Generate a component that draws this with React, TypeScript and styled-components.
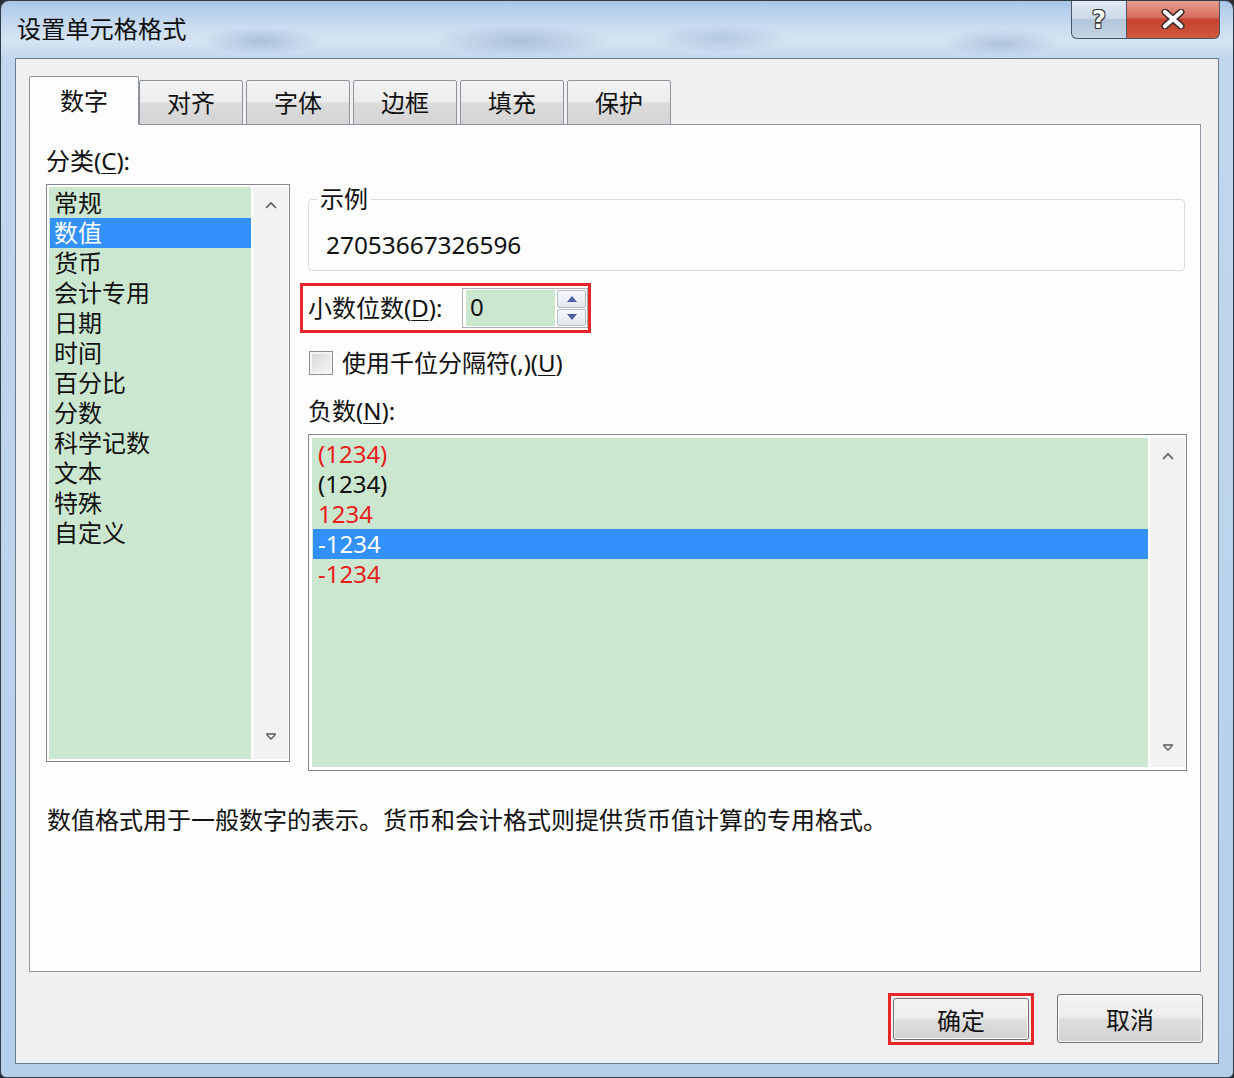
import React from "react";
import styled, { createGlobalStyle } from "styled-components";

const Global = createGlobalStyle`
  html, body { margin: 0; padding: 0; background: #2a2f35; }
  body { font-family: "Noto Sans", "Noto Sans CJK SC", sans-serif; color: #111; }
  * { box-sizing: border-box; }
`;

const Window = styled.div`
  width: 1234px;
  height: 1078px;
  border: 1px solid #2f3b47;
  border-radius: 9px 9px 6px 6px;
  overflow: hidden;
  display: flex;
  flex-direction: column;
  padding: 0 14px 13px 14px;
  background:
    radial-gradient(ellipse 60px 14px at 260px 40px, rgba(120,150,185,0.45), transparent),
    radial-gradient(ellipse 90px 16px at 520px 40px, rgba(110,140,175,0.4), transparent),
    radial-gradient(ellipse 70px 14px at 720px 38px, rgba(120,150,185,0.35), transparent),
    radial-gradient(ellipse 60px 14px at 1000px 42px, rgba(110,140,175,0.35), transparent),
    linear-gradient(180deg, #a9c6e6 0px, #c6daef 22px, #d5e4f3 40px, #c2d7ee 58px, #b5cfea 100%);
`;

const TitleBar = styled.div`
  height: 57px;
  flex: 0 0 57px;
  display: flex;
  justify-content: space-between;
  align-items: flex-start;
`;

const Title = styled.div`
  font-size: 24.2px;
  line-height: 30px;
  margin: 13px 0 0 2px;
  color: #0d0d0d;
`;

const Caption = styled.div`
  display: flex;
  margin-top: -1px;
  margin-right: -1px;
`;

const CapButton = styled.div<{ $close?: boolean }>`
  height: 39px;
  width: ${(p) => (p.$close ? 93 : 56)}px;
  border: 1px solid #4a5663;
  border-top: none;
  border-left: ${(p) => (p.$close ? "none" : "1px solid #4a5663")};
  border-radius: ${(p) => (p.$close ? "0 0 6px 0" : "0 0 0 6px")};
  display: flex;
  align-items: center;
  justify-content: center;
  background: ${(p) =>
    p.$close
      ? "linear-gradient(180deg, #e7a091 0%, #d97060 45%, #c5412c 52%, #cf5a40 100%)"
      : "linear-gradient(180deg, #e3ebf4 0%, #ccd9e7 48%, #b3c5d9 52%, #c5d4e4 100%)"};
`;

const HelpGlyph = styled.span`
  font-family: "DejaVu Sans", sans-serif;
  font-weight: bold;
  font-size: 24px;
  line-height: 1;
  color: #fff;
  text-shadow: -1px -1px 0 #333, 1px -1px 0 #333, -1px 1px 0 #333, 1px 1px 0 #333;
  margin-top: 2px;
`;

const Client = styled.div`
  flex: 1;
  border: 1px solid #6c7b8a;
  background: #f0f0f0;
  display: flex;
  flex-direction: column;
  padding: 17px 17px 0 13px;
`;

const TabRow = styled.div`
  display: flex;
  align-items: flex-end;
  height: 49px;
  margin-bottom: -1px;
  position: relative;
  z-index: 1;
`;

const Tab = styled.div<{ $active?: boolean }>`
  width: ${(p) => (p.$active ? 110 : 104)}px;
  height: ${(p) => (p.$active ? 49 : 45)}px;
  margin-right: ${(p) => (p.$active ? 0 : 3)}px;
  border: 1px solid #8c939c;
  border-bottom: ${(p) => (p.$active ? "1px solid #fdfdfd" : "1px solid #8c939c")};
  border-radius: 2px 2px 0 0;
  display: flex;
  justify-content: center;
  align-items: ${(p) => (p.$active ? "flex-start" : "center")};
  padding-top: ${(p) => (p.$active ? 9 : 0)}px;
  font-size: 24px;
  line-height: 30px;
  background: ${(p) =>
    p.$active
      ? "#fdfdfd"
      : "linear-gradient(180deg, #f3f3f3 0%, #ececec 48%, #dcdcdc 52%, #d4d4d4 100%)"};
`;

const Panel = styled.div`
  flex: 0 0 848px;
  border: 1px solid #8e98a3;
  background: #fdfdfd;
  padding: 21px 13px 0 16px;
  display: flex;
  flex-direction: column;
`;

const FieldLabel = styled.div`
  font-size: 24px;
  line-height: 30px;
  color: #111;
`;

const Key = styled.span`
  text-decoration: underline;
  text-underline-offset: 3px;
  text-decoration-thickness: 1px;
`;

const Columns = styled.div`
  display: grid;
  grid-template-columns: 244px 1fr;
  column-gap: 18px;
  margin-top: 8px;
  align-items: start;
`;

const ListBox = styled.div<{ $h: number; $pad: number }>`
  height: ${(p) => p.$h}px;
  border: 1px solid #838890;
  background: #fff;
  padding: ${(p) => p.$pad}px 1px ${(p) => p.$pad}px ${(p) => p.$pad}px;
  display: flex;
`;

const ListArea = styled.div`
  flex: 1;
  background: #cce7cf;
  padding-top: 1px;
`;

const Item = styled.div<{ $sel?: boolean; $red?: boolean; $indent: number }>`
  height: 30px;
  line-height: 30px;
  font-size: 24px;
  padding-left: ${(p) => p.$indent}px;
  margin-left: 1px;
  background: ${(p) => (p.$sel ? "#3391fb" : "transparent")};
  color: ${(p) => (p.$sel ? "#fff" : p.$red ? "#e8201c" : "#111")};
  white-space: nowrap;
`;

const ScrollBar = styled.div<{ $top: number; $bottom: number }>`
  width: 35px;
  margin-left: 2px;
  background: #f2f2f3;
  display: flex;
  flex-direction: column;
  justify-content: space-between;
  align-items: center;
  padding: ${(p) => p.$top}px 0 ${(p) => p.$bottom}px;
`;

const RightCol = styled.div`
  display: flex;
  flex-direction: column;
  align-items: flex-start;
`;

const Sample = styled.fieldset`
  margin: 0 2px 0 0;
  align-self: stretch;
  padding: 0;
  border: 1px solid #d6dde3;
  border-radius: 4px;
  min-width: 0;
`;

const Legend = styled.legend`
  margin-left: 8px;
  padding: 0 3px;
  font-size: 24px;
  line-height: 30px;
`;

const SampleValue = styled.div`
  padding-left: 17px;
  margin: 16px 0 10px;
  font-size: 24.4px;
  line-height: 30px;
  color: #111;
`;

const RedFrame = styled.div<{ $w: number; $h: number }>`
  width: ${(p) => p.$w}px;
  height: ${(p) => p.$h}px;
  border: 3px solid #e8262a;
  display: flex;
  align-items: center;
`;

const DecimalRow = styled(RedFrame)`
  margin: 12px 0 0 -8px;
  padding-left: 5px;
`;

const SpinBox = styled.div`
  margin-left: auto;
  width: 126px;
  height: 40px;
  border: 1px solid #adb2b8;
  background: #fff;
  display: flex;
  padding: 1px 1px 1px 3px;
`;

const SpinField = styled.div`
  flex: 1;
  background: #cce7cf;
  font-size: 24px;
  line-height: 34px;
  padding-left: 4px;
  color: #111;
`;

const SpinButtons = styled.div`
  width: 29px;
  margin-left: 2px;
  display: flex;
  flex-direction: column;
  gap: 1px;
`;

const SpinBtn = styled.div`
  flex: 1;
  border: 1px solid #b6bcc4;
  border-radius: 2px;
  background: linear-gradient(180deg, #f7f9fb, #e2e7ee);
  display: flex;
  align-items: center;
  justify-content: center;
`;

const CheckRow = styled.div`
  display: flex;
  align-items: center;
  margin-top: 18px;
  height: 24px;
  margin-left: 1px;
`;

const CheckBox = styled.div`
  width: 24px;
  height: 24px;
  border: 1px solid #8e8f8f;
  background: linear-gradient(135deg, #d8d8d8, #f6f6f6);
  box-shadow: inset 0 0 0 2px #f4f4f4;
`;

const CheckText = styled.span`
  margin-left: 9px;
  font-size: 24px;
  line-height: 30px;
`;

const NegLabel = styled(FieldLabel)`
  margin-top: 21px;
`;

const NegList = styled(ListBox)`
  margin-top: 8px;
  align-self: stretch;
`;

const Description = styled.div`
  margin: 34px 0 0 1px;
  font-size: 24px;
  line-height: 30px;
  color: #111;
  white-space: nowrap;
`;

const ButtonRow = styled.div`
  display: flex;
  justify-content: flex-end;
  align-items: flex-start;
  gap: 23px;
  padding-top: 21px;
  margin-right: -2px;
`;

const OkFrame = styled(RedFrame)`
  padding: 2px;
  justify-content: center;
`;

const Button = styled.div<{ $w: number; $h: number }>`
  width: ${(p) => p.$w}px;
  height: ${(p) => p.$h}px;
  border: 1px solid #707070;
  border-radius: 3px;
  display: flex;
  align-items: center;
  justify-content: center;
  font-size: 24px;
  color: #111;
  background: linear-gradient(180deg, #f4f4f4 0%, #ececec 48%, #dedede 52%, #d2d2d2 100%);
  box-shadow: inset 0 0 0 1px #fbfbfb;
`;

const CancelButton = styled(Button)`
  margin-top: 1px;
`;

const UpArrow = () => (
  <svg width="12" height="8" viewBox="0 0 12 8">
    <path d="M1 7 L6 2 L11 7" fill="none" stroke="#5a5a5a" strokeWidth="1.6" />
  </svg>
);

const DownArrow = () => (
  <svg width="12" height="8" viewBox="0 0 12 8">
    <path d="M1 1 L11 1 M2 2 L6 6 L10 2" fill="none" stroke="#5a5a5a" strokeWidth="1.4" />
  </svg>
);

const Tri = ({ up }: { up?: boolean }) => (
  <svg width="10" height="6" viewBox="0 0 10 6">
    <path d={up ? "M0 6 L5 0 L10 6 Z" : "M0 0 L10 0 L5 6 Z"} fill="#4b5ea6" />
  </svg>
);

const CloseX = () => (
  <svg width="26" height="20" viewBox="0 0 26 20">
    <path d="M5 3 L21 17 M21 3 L5 17" stroke="#3a2a28" strokeWidth="7" strokeLinecap="round" />
    <path d="M5 3 L21 17 M21 3 L5 17" stroke="#ffffff" strokeWidth="4.2" strokeLinecap="round" />
  </svg>
);

const categories = ["常规", "数值", "货币", "会计专用", "日期", "时间", "百分比", "分数", "科学记数", "文本", "特殊", "自定义"];

const negatives: { text: string; red?: boolean; sel?: boolean }[] = [
  { text: "(1234)", red: true },
  { text: "(1234)" },
  { text: "1234", red: true },
  { text: "-1234", sel: true },
  { text: "-1234", red: true },
];

const tabs = ["数字", "对齐", "字体", "边框", "填充", "保护"];

export default function App() {
  return (
    <>
      <Global />
      <Window>
        <TitleBar>
          <Title>设置单元格格式</Title>
          <Caption>
            <CapButton>
              <HelpGlyph>?</HelpGlyph>
            </CapButton>
            <CapButton $close>
              <CloseX />
            </CapButton>
          </Caption>
        </TitleBar>
        <Client>
          <TabRow>
            {tabs.map((t, i) => (
              <Tab key={t} $active={i === 0}>
                {t}
              </Tab>
            ))}
          </TabRow>
          <Panel>
            <FieldLabel>
              分类(<Key>C</Key>):
            </FieldLabel>
            <Columns>
              <ListBox $h={578} $pad={2}>
                <ListArea>
                  {categories.map((c, i) => (
                    <Item key={c} $sel={i === 1} $indent={4}>
                      {c}
                    </Item>
                  ))}
                </ListArea>
                <ScrollBar $top={14} $bottom={18}>
                  <UpArrow />
                  <DownArrow />
                </ScrollBar>
              </ListBox>
              <RightCol>
                <Sample>
                  <Legend>示例</Legend>
                  <SampleValue>27053667326596</SampleValue>
                </Sample>
                <DecimalRow $w={291} $h={50}>
                  <FieldLabel>
                    小数位数(<Key>D</Key>):
                  </FieldLabel>
                  <SpinBox>
                    <SpinField>0</SpinField>
                    <SpinButtons>
                      <SpinBtn>
                        <Tri up />
                      </SpinBtn>
                      <SpinBtn>
                        <Tri />
                      </SpinBtn>
                    </SpinButtons>
                  </SpinBox>
                </DecimalRow>
                <CheckRow>
                  <CheckBox />
                  <CheckText>
                    使用千位分隔符(,)(<Key>U</Key>)
                  </CheckText>
                </CheckRow>
                <NegLabel>
                  负数(<Key>N</Key>):
                </NegLabel>
                <NegList $h={337} $pad={3}>
                  <ListArea>
                    {negatives.map((n, i) => (
                      <Item key={i} $sel={n.sel} $red={n.red} $indent={5}>
                        {n.text}
                      </Item>
                    ))}
                  </ListArea>
                  <ScrollBar $top={14} $bottom={15}>
                    <UpArrow />
                    <DownArrow />
                  </ScrollBar>
                </NegList>
              </RightCol>
            </Columns>
            <Description>
              数值格式用于一般数字的表示。货币和会计格式则提供货币值计算的专用格式。
            </Description>
          </Panel>
          <ButtonRow>
            <OkFrame $w={146} $h={52}>
              <Button $w={137} $h={42}>确定</Button>
            </OkFrame>
            <CancelButton $w={146} $h={49}>取消</CancelButton>
          </ButtonRow>
        </Client>
      </Window>
    </>
  );
}
